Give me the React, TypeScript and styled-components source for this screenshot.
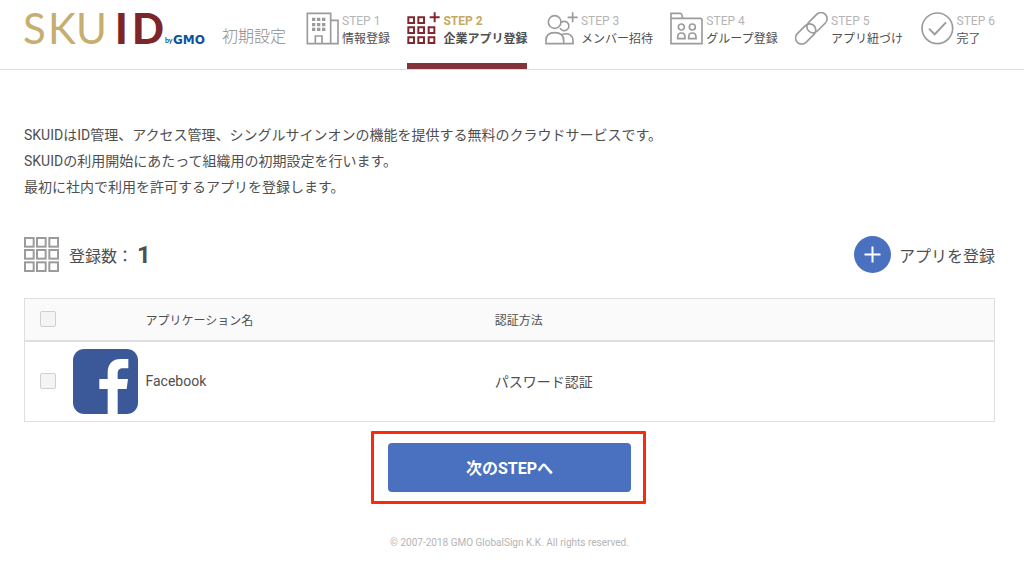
import React from 'react';
import styled, { createGlobalStyle, css } from 'styled-components';

const GlobalStyle = createGlobalStyle`
  *, *::before, *::after { box-sizing: border-box; }
  body {
    margin: 0;
    background: #fff;
    color: #4f4f4f;
    font-family: Roboto, 'Noto Sans CJK JP', sans-serif;
    font-size: 14px;
  }
`;

const Header = styled.header`
  display: flex;
  align-items: stretch;
  height: 70px;
  padding: 0 29px 0 24px;
  border-bottom: 1px solid #dcdcdc;
`;

const Brand = styled.div`
  display: flex;
  flex: none;
  width: 282px;
  gap: 14px;
`;

const Logo = styled.svg`
  flex: none;
  width: 184px;
  height: 52px;
`;

const PageTitle = styled.h1`
  margin: 0;
  padding-top: 24px;
  font-size: 16px;
  line-height: 26px;
  font-weight: 300;
  color: #8c8c8c;
`;

const Steps = styled.ol`
  display: flex;
  flex: 1;
  justify-content: space-between;
  margin: 0;
  padding: 0;
  list-style: none;
`;

const StepItem = styled.li<{ $active?: boolean }>`
  display: flex;
  gap: 3px;
  padding-top: 12px;
  line-height: 18px;
  font-size: 12px;
  white-space: nowrap;
  border-bottom: 6px solid transparent;
  ${(p) =>
    p.$active &&
    css`
      border-bottom-color: #83343a;
      font-weight: 700;
    `}
`;

const StepIcon = styled.svg<{ $active?: boolean }>`
  flex: none;
  width: 33px;
  height: 33px;
  fill: none;
  stroke: ${(p) => (p.$active ? '#80282e' : '#9b9b9b')};
  stroke-width: 5;
`;

const StepNumber = styled.div<{ $active?: boolean }>`
  color: ${(p) => (p.$active ? '#c6a962' : '#b4b4b4')};
`;

const Main = styled.main`
  padding: 52px 29px 0 24px;
`;

const Intro = styled.p`
  margin: 0;
  line-height: 26px;
`;

const Summary = styled.div`
  display: flex;
  align-items: center;
  justify-content: space-between;
  margin: 36px 0 25px;
  height: 37px;
  font-size: 16px;
`;

const Count = styled.div`
  display: flex;
  align-items: center;
  gap: 10px;
`;

const CountValue = styled.strong`
  margin-left: -6px;
  font-size: 24px;
`;

const GridIcon = styled.svg`
  width: 35px;
  height: 35px;
  fill: none;
  stroke: #9b9b9b;
  stroke-width: 6;
`;

const AddButton = styled.button`
  display: flex;
  align-items: center;
  gap: 8px;
  padding: 0;
  border: 0;
  background: none;
  color: inherit;
  font: inherit;
  cursor: pointer;
`;

const PlusIcon = styled.svg`
  width: 37px;
  height: 37px;
`;

const AppTable = styled.table`
  width: 100%;
  table-layout: fixed;
  border-collapse: collapse;
  border: 1px solid #dfdfdf;
  text-align: left;
`;

const HeadRow = styled.tr`
  height: 42px;
  background: #fafafa;
  border-bottom: 2px solid #dfdfdf;
  font-size: 12px;
`;

const BodyRow = styled.tr`
  height: 81px;
`;

const HeadCell = styled.th<{ $width?: string }>`
  width: ${(p) => p.$width ?? 'auto'};
  padding: 0;
  font-weight: 400;
`;

const Cell = styled.td`
  padding: 0;
`;

const Check = styled.input`
  display: block;
  appearance: none;
  width: 16px;
  height: 16px;
  margin: 0 0 0 15px;
  border: 1px solid #cfcfcf;
  border-radius: 2px;
  background: #f4f4f4;
  &:checked { background: #4a71bf; }
`;

const AppLogo = styled.svg`
  display: block;
  width: 65px;
  height: 65px;
`;

const Actions = styled.div`
  display: flex;
  justify-content: center;
  margin-top: 21px;
`;

const Highlight = styled.div`
  position: relative;
  width: 25%;
  &::after {
    content: '';
    position: absolute;
    inset: -12px -15px -12px -17px;
    border: 3px solid #fb2a0b;
    border-radius: 1px;
    pointer-events: none;
  }
`;

const NextButton = styled.button`
  display: block;
  width: 100%;
  height: 49px;
  padding: 0 0 2px;
  border: 0;
  border-radius: 4px;
  background: #4a71bf;
  color: #fff;
  font: inherit;
  font-size: 16px;
  font-weight: 700;
  cursor: pointer;
`;

const Footer = styled.footer`
  padding: 43px 29px 16px 24px;
  text-align: center;
  font-size: 10px;
  line-height: 16px;
  color: #b4b4b4;
`;

const icons = {
  building: (
    <>
      <path d="M4 4h70v91H4zM74 25h22v70H74M28 95V72h20v23" />
      <path d="M18 22h42M18 38h42M18 52h42" strokeWidth={10} strokeDasharray="10 5" />
    </>
  ),
  apps: (
    <path
      d="M4 16h17v17H4zM34 16h17v17H34zM4 46h17v17H4zM34 46h17v17H34zM65 46h17v17H65zM4 76h17v17H4zM34 76h17v17H34zM65 76h17v17H65zM83 1v30M68 16h30"
      strokeWidth={6}
    />
  ),
  members: (
    <path d="M48 30a19 19 0 1 1-38 0a19 19 0 1 1 38 0M49 31a14 14 0 1 1-4 17M3 95V85C3 69 13 62 29 62S56 69 56 85V95zM52 67C72 61 84 71 84 87V95H56M83 1v30M68 16h30" />
  ),
  group: (
    <>
      <path d="M3 95V4h28q4 0 5 6l2 9h53q5 0 5 5v71zM3 19h35" />
      <path d="M43 45a9 9 0 1 1-18 0a9 9 0 1 1 18 0M76 45a9 9 0 1 1-18 0a9 9 0 1 1 18 0M23 80v-5q0-12 11-12t11 12v5zM56 80v-5q0-12 11-12t11 12v5z" />
    </>
  ),
  link: (
    <path d="M65 7L41 31A18 18 0 0 0 67 57L91 33A18 18 0 0 0 65 7zM7 65L31 41A18 18 0 0 1 57 67L33 91A18 18 0 0 1 7 65z" />
  ),
  done: (
    <>
      <circle cx={49} cy={49} r={46} />
      <path d="M24 50l17 17l34-36" strokeWidth={6} />
    </>
  ),
};

const steps: { icon: keyof typeof icons; label: string; active?: boolean }[] = [
  { icon: 'building', label: '情報登録' },
  { icon: 'apps', label: '企業アプリ登録', active: true },
  { icon: 'members', label: 'メンバー招待' },
  { icon: 'group', label: 'グループ登録' },
  { icon: 'link', label: 'アプリ紐づけ' },
  { icon: 'done', label: '完了' },
];

export default function App() {
  return (
    <>
      <GlobalStyle />
      <Header>
        <Brand>
          <Logo viewBox="0 0 184 52" role="img" aria-label="SKUID by GMO" fontFamily="Lato, sans-serif">
            <g fontSize={42} fill="#c6ad70">
              <text x={-1} y={44}>S</text>
              <text x={24} y={44}>K</text>
              <text x={52} y={44}>U</text>
            </g>
            <g fontSize={42} fontWeight={900} fill="#7c262b">
              <text x={91} y={44}>I</text>
              <text x={108} y={44}>D</text>
            </g>
            <text x={141} y={43} fontSize={7} fontWeight={700} fill="#0b54a0">by</text>
            <text x={149} y={44} fontSize={12} fontWeight={700} fontFamily="DejaVu Sans" fill="#0b54a0">GMO</text>
          </Logo>
          <PageTitle>初期設定</PageTitle>
        </Brand>
        <Steps>
          {steps.map((step, i) => (
            <StepItem key={step.icon} $active={step.active} aria-current={step.active ? 'step' : undefined}>
              <StepIcon viewBox="0 0 99 99" $active={step.active} aria-hidden="true">
                {icons[step.icon]}
              </StepIcon>
              <div>
                <StepNumber $active={step.active}>STEP {i + 1}</StepNumber>
                <div>{step.label}</div>
              </div>
            </StepItem>
          ))}
        </Steps>
      </Header>
      <Main>
        <Intro>
          SKUIDはID管理、アクセス管理、シングルサインオンの機能を提供する無料のクラウドサービスです。
          <br />
          SKUIDの利用開始にあたって組織用の初期設定を行います。
          <br />
          最初に社内で利用を許可するアプリを登録します。
        </Intro>
        <Summary>
          <Count>
            <GridIcon viewBox="0 0 105 105" aria-hidden="true">
              {[3, 39, 76].map((y) =>
                [3, 39, 76].map((x) => <rect key={`${x}-${y}`} x={x} y={y} width={26} height={26} />),
              )}
            </GridIcon>
            <span>登録数：</span>
            <CountValue>1</CountValue>
          </Count>
          <AddButton type="button">
            <PlusIcon viewBox="0 0 37 37" aria-hidden="true">
              <circle cx={18.5} cy={18.5} r={18.5} fill="#4a71bf" />
              <path d="M18.5 10.5v16M10.5 18.5h16" stroke="#fff" strokeWidth={2} />
            </PlusIcon>
            アプリを登録
          </AddButton>
        </Summary>
        <AppTable>
          <thead>
            <HeadRow>
              <HeadCell $width="48px">
                <Check type="checkbox" aria-label="すべて選択" />
              </HeadCell>
              <HeadCell $width="73px" />
              <HeadCell $width="36%">アプリケーション名</HeadCell>
              <HeadCell>認証方法</HeadCell>
            </HeadRow>
          </thead>
          <tbody>
            <BodyRow>
              <Cell>
                <Check type="checkbox" aria-label="Facebook" />
              </Cell>
              <Cell>
                <AppLogo viewBox="0 0 195 195" aria-hidden="true">
                  <rect width={195} height={195} rx={34} fill="#3b5998" />
                  <path d="M104 195V120H79V90h25V71C104 44 119 30 143 30h23v28h-15C139 58 134 63 134 74v16h31l-4 30h-27v75z" fill="#fff" />
                </AppLogo>
              </Cell>
              <Cell>Facebook</Cell>
              <Cell>パスワード認証</Cell>
            </BodyRow>
          </tbody>
        </AppTable>
        <Actions>
          <Highlight>
            <NextButton type="button">次のSTEPへ</NextButton>
          </Highlight>
        </Actions>
      </Main>
      <Footer>© 2007-2018 GMO GlobalSign K.K. All rights reserved.</Footer>
    </>
  );
}
